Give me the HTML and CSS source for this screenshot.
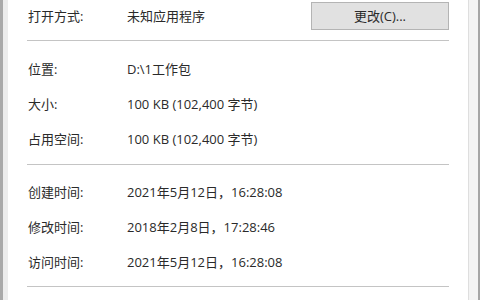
FILE: index.html
```html
<!DOCTYPE html>
<html lang="zh-CN">
<head>
<meta charset="utf-8">
<title>属性</title>
<link rel="stylesheet" href="styles.css">
</head>
<body>
<div class="window">
  <div class="edge-left"></div>
  <div class="content">
    <div class="row top">
      <span class="label">打开方式:</span>
      <span class="value">未知应用程序</span>
      <button class="btn" type="button">更改(C)...</button>
    </div>
    <div class="sep first"></div>
    <div class="group g1">
      <div class="row"><span class="label">位置:</span><span class="value">D:\1工作包</span></div>
      <div class="row"><span class="label">大小:</span><span class="value">100 KB (102,400 字节)</span></div>
      <div class="row"><span class="label">占用空间:</span><span class="value">100 KB (102,400 字节)</span></div>
    </div>
    <div class="sep"></div>
    <div class="group g2">
      <div class="row"><span class="label">创建时间:</span><span class="value">2021年5月12日，16:28:08</span></div>
      <div class="row"><span class="label">修改时间:</span><span class="value">2018年2月8日，17:28:46</span></div>
      <div class="row"><span class="label">访问时间:</span><span class="value">2021年5月12日，16:28:08</span></div>
    </div>
    <div class="sep"></div>
  </div>
  <div class="edge-right"></div>
</div>
</body>
</html>
```
FILE: styles.css
```css
html, body {
  margin: 0;
  padding: 0;
  background: #ffffff;
}
body {
  width: 480px;
  height: 300px;
  overflow: hidden;
  font-family: "Open Sans", "Noto Sans CJK SC", sans-serif;
  font-size: 13px;
  color: #2a2a2a;
}
.window {
  display: flex;
  width: 480px;
  height: 300px;
}
.edge-left {
  width: 5px;
  flex: none;
  border-left: 3px solid #a9a9a9;
  background: #ececec;
}
.content {
  flex: 1;
  padding: 0 19px 0 20px;
  display: flex;
  flex-direction: column;
}
.edge-right {
  width: 9px;
  flex: none;
  border-left: 1px solid #dedede;
  border-right: 2px solid #a5a5a5;
  background: #f3f3f3;
}
.row {
  display: flex;
  align-items: center;
  height: 35px;
}
.row.top {
  height: 30px;
}
.label {
  width: 99px;
  flex: none;
  white-space: nowrap;
}
.value {
  flex: 1;
  white-space: nowrap;
}
.btn {
  width: 138px;
  height: 28px;
  margin-top: 1px;
  flex: none;
  background: #e1e1e1;
  border: 1px solid #b4b4b4;
  border-radius: 0;
  font-family: inherit;
  font-size: 13px;
  color: #2a2a2a;
  padding: 0;
}
.sep {
  height: 1px;
  background: #c4c4c4;
  margin-left: -1px;
}
.sep.first {
  margin-top: 10px;
}
.group.g1 {
  padding: 10px 0 8px;
}
.group.g2 {
  padding: 9px 0 7px;
}
```
